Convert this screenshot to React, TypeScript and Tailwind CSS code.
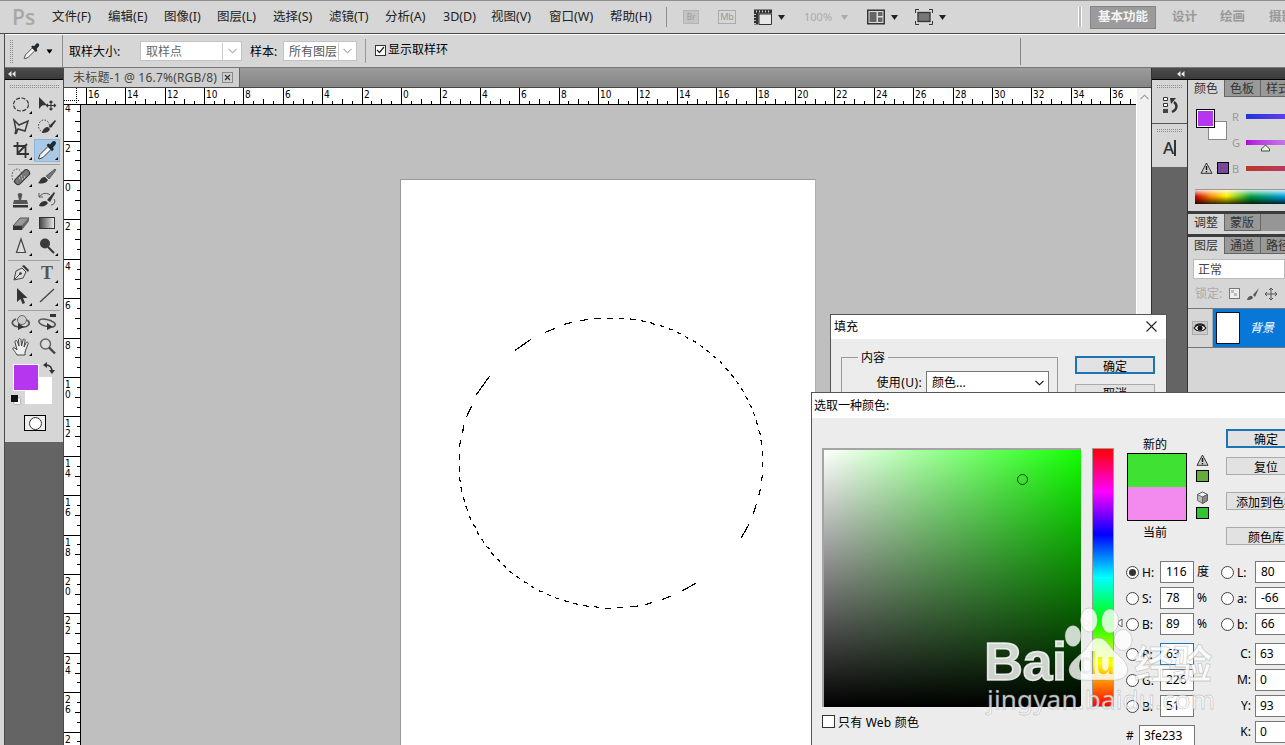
import type { ReactNode } from "react";

const menus = [
  { label: "文件(F)", width: "w-[56px]" },
  { label: "编辑(E)", width: "w-[56px]" },
  { label: "图像(I)", width: "w-[53px]" },
  { label: "图层(L)", width: "w-[56px]" },
  { label: "选择(S)", width: "w-[56px]" },
  { label: "滤镜(T)", width: "w-[56px]" },
  { label: "分析(A)", width: "w-[58px]" },
  { label: "3D(D)", width: "w-[48px]" },
  { label: "视图(V)", width: "w-[58px]" },
  { label: "窗口(W)", width: "w-[61px]" },
  { label: "帮助(H)", width: "w-[56px]" },
];

const UNIT = 39.4;

const Caret = ({ className = "" }: { className?: string }) => (
  <svg className={`shrink-0 ${className}`} width="7" height="5" viewBox="0 0 7 5" fill="currentColor">
    <path d="M0 0h7L3.5 5z" />
  </svg>
);

const Chevron = () => (
  <svg width="9" height="6" viewBox="0 0 9 6" fill="none" stroke="currentColor" strokeWidth="1.1">
    <path d="M.5.8 4.5 4.8 8.5.8" />
  </svg>
);

const Collapse = () => (
  <svg width="8" height="6" viewBox="0 0 8 6" fill="#e4e4e4">
    <path d="M3.5 0v6L0 3zM7.5 0v6L4 3z" />
  </svg>
);

const Grip = ({ className = "" }: { className?: string }) => (
  <div className={`shrink-0 bg-[linear-gradient(90deg,#d6d6d6_1px,transparent_1px),linear-gradient(#d6d6d6_1px,#8c8c8c_1px)] bg-[length:2px_2px] ${className}`} />
);

const Eyedropper = () => (
  <>
    <path d="M3.5 20.5 5 16.5l8-8 3 3-8 8-4 1.5z" fill="#f4f4f4" stroke="#3a3a3a" />
    <path d="m11.5 7 2-1.500 1.500 1 2.500-3c2-1.500 4.500.5 3 3L18 9.500l.8 1.800-1.800 2z" fill="#1f2a33" />
  </>
);

const MenuBar = () => (
  <header className="flex h-[34px] shrink-0 items-center border-t border-b border-t-[#8f8f8f] border-b-[#4a4a4a] bg-[#d6d6d6] pl-3 whitespace-nowrap">
    <div className="w-10 shrink-0 font-['Open_Sans',sans-serif] text-[21px] leading-8 font-semibold text-[#a8a8a8]">Ps</div>
    {menus.map((m) => (
      <div key={m.label} className={`shrink-0 pt-px text-[12.5px] text-[#222] ${m.width}`}>
        {m.label}
      </div>
    ))}
    <div className="h-5 w-px shrink-0 bg-[#8d8d8d]" />
    <div className="ml-4 flex h-[14px] w-4 shrink-0 items-center justify-center border border-[#b4b4b4] bg-[#c3c3c3] text-[8px] text-[#999]">Br</div>
    <div className="ml-[19px] flex h-[14px] w-[18px] shrink-0 items-center justify-center border border-[#aaa] text-[9px] text-[#999]">Mb</div>
    <svg className="ml-[18px] shrink-0" width="18" height="16" viewBox="0 0 18 16">
      <path d="M0 .5h18v4H4.500V15.500H0z" fill="#333" />
      <path d="M5 5h12.500v10.500H5z" fill="#e8e8e8" stroke="#333" />
      <path d="M2 2.500h14" stroke="#ccc" strokeDasharray="1 2" strokeWidth="2" />
      <path d="M1 5v10" stroke="#bbb" strokeDasharray="1 2" strokeWidth="2" />
    </svg>
    <Caret className="ml-[6px] text-[#222]" />
    <div className="ml-[19px] w-[30px] shrink-0 text-[11px] text-[#aaa]">100%</div>
    <Caret className="ml-[7px] text-[#aaa]" />
    <svg className="ml-[19px] shrink-0" width="18" height="16" viewBox="0 0 18 16">
      <rect x=".75" y="1.250" width="16.500" height="13.500" fill="#ddd" stroke="#333" strokeWidth="1.500" />
      <path d="M2.500 3h7v10h-7zM11 3h4.500v4H11zM11 8.500h4.500V13H11z" fill="#666" />
    </svg>
    <Caret className="ml-[6px] text-[#222]" />
    <svg className="ml-[17px] shrink-0" width="18" height="16" viewBox="0 0 18 16">
      <path d="M.5 4V.5H4M14 .5h3.500V4M17.500 12v3.500H14M4 15.500H.5V12" fill="none" stroke="#333" />
      <rect x="3" y="3.500" width="12" height="9" fill="#777" stroke="#333" strokeWidth="1.300" />
    </svg>
    <Caret className="ml-[6px] text-[#222]" />
    <div className="mr-[203px] ml-auto h-5 w-[4px] shrink-0 border-x border-x-white bg-[#bbb]" />
  </header>
);

const Workspaces = () => (
  <div className="absolute top-[6px] left-[1090px] flex items-center text-[12.5px] font-bold whitespace-nowrap text-[#999]">
    <div className="flex h-[23px] w-[66px] items-center justify-center border border-[#858585] bg-[#9b9b9b] text-[#f4f4f4]">基本功能</div>
    <div className="ml-4 w-12">设计</div>
    <div className="w-[49px]">绘画</div>
    <div>摄影</div>
  </div>
);

const OptionsBar = () => (
  <div className="flex h-[34px] shrink-0 items-center border-t border-b border-t-white border-b-[#777] bg-[#d6d6d6] pl-1 text-[12px] whitespace-nowrap text-black">
    <Grip className="h-6 w-1" />
    <svg className="ml-[9px] shrink-0" width="19" height="18" viewBox="1 2 22 20">
      <Eyedropper />
    </svg>
    <Caret className="ml-[5px] scale-90" />
    <div className="ml-[9px] h-full w-px shrink-0 bg-[#8d8d8d]" />
    <div className="ml-[6px] w-[71px] shrink-0 pt-0.5">取样大小:</div>
    <div className="flex h-5 w-[102px] shrink-0 items-center border border-[#c2c2c2] bg-white text-[#666]">
      <div className="flex h-[17px] w-[82px] items-center border-r border-[#ccc] pt-0.5 pl-[5px]">取样点</div>
      <div className="flex flex-1 justify-center text-[#aaa]"><Chevron /></div>
    </div>
    <div className="ml-2 w-[33px] shrink-0 pt-0.5">样本:</div>
    <div className="flex h-5 w-[74px] shrink-0 items-center border border-[#c2c2c2] bg-white text-[#555]">
      <div className="flex h-[17px] w-[55px] items-center border-r border-[#ccc] pt-0.5 pl-[5px]">所有图层</div>
      <div className="flex flex-1 justify-center text-[#aaa]"><Chevron /></div>
    </div>
    <div className="ml-2 h-6 w-px shrink-0 bg-[#999]" />
    <div className="mb-0.5 ml-[9px] flex h-[11px] w-[11px] shrink-0 items-center justify-center border border-[#333] bg-white">
      <svg width="9" height="8" viewBox="0 0 9 8" fill="none" stroke="#222" strokeWidth="1.200"><path d="m1 4 2.500 2.500L8 1" /></svg>
    </div>
    <div className="ml-[2px] w-[632px] shrink-0 pb-0.5">显示取样环</div>
    <div className="h-[27px] w-px shrink-0 bg-[#888]" />
  </div>
);

/* Tool glyphs are drawn in a 26x23 cell */
const toolGroups: { icon: ReactNode; selected?: boolean; single?: boolean }[][] = [
  [
    { icon: <ellipse cx="13" cy="11.500" rx="7.500" ry="6.500" fill="none" stroke="#333" strokeDasharray="4 1.5" strokeWidth="1.2" /> },
    { icon: <><path d="M5 4v12l3-3.500L13 12z" fill="#333" /><path d="M17 8v9M12.500 12.500h9M15.500 9.500 17 8l1.500 1.500M15.500 15.500 17 17l1.500-1.500M14 11l-1.500 1.500L14 14M20 11l1.500 1.500L20 14" fill="none" stroke="#333" strokeWidth="1.200" /></>, single: true },
    { icon: <path d="m6 4 5 5 9-4-3 10-7-2-3 5 1-4zM10 13l-2 5" fill="none" stroke="#3b3b3b" strokeWidth="1.500" /> },
    { icon: <><ellipse cx="10" cy="10" rx="5.500" ry="6" fill="none" stroke="#333" strokeDasharray="1.500 1.500" /><path d="M8 17c1-5 4-6 6-6l2 2c-1 3-4 4-8 4zM15 10l6-6 1 1-5 7z" fill="#333" /></> },
    { icon: <path d="M9.500 3v12H21M5.500 7h12v12M10 14l9-9" fill="none" stroke="#333" strokeWidth="1.800" /> },
    { icon: <g transform="translate(1 -1)"><Eyedropper /></g>, selected: true },
  ],
  [
    { icon: <><ellipse cx="9" cy="10" rx="5" ry="7" fill="none" stroke="#444" strokeDasharray="1.500 1.500" /><rect x="5" y="8" width="18" height="6.500" rx="3" transform="rotate(-45 14 11)" fill="#777" stroke="#333" /><path d="M11 12h1M13 10h1M14 13h1M16 11h1" stroke="#eee" /></> },
    { icon: <><path d="M4 17c2-1 2-6 7-6l3 3c-2 4-7 4-10 3z" fill="#333" /><path d="m12 10 9-7 1 1-7 9z" fill="#777" stroke="#333" strokeWidth=".6" /></> },
    { icon: <><path d="M11 11 10 7c-2-4 6-4 4 0l-1 4h6l1 4H5l1-4z" fill="#555" /><path d="M5 16h15v2.500H5z" fill="#333" /></> },
    { icon: <><path d="M5 17c1-4 4-5 7-5l2 2c-2 3-5 4-9 3zM13 11l7-8 1 1-5 9z" fill="#333" /><path d="M5 8c4-5 9-4 11-2M5 4v4h4M20 10c2 3 0 6-3 6" fill="none" stroke="#555" /></> },
    { icon: <><path d="m5 14 7-8h9l-7 8z" fill="#999" stroke="#555" /><path d="M5 14h9v4H5z" fill="#333" /><path d="m14 14 7-8v3l-7 9z" fill="#666" /></> },
    { icon: <><defs><linearGradient id="toolGrad"><stop stopColor="#444" /><stop offset="1" stopColor="#eee" /></linearGradient></defs><rect x="5.500" y="5.500" width="15" height="11" fill="url(#toolGrad)" stroke="#333" /></> },
    { icon: <path d="M13 4 8.500 17.500h9z" fill="#ddd" stroke="#444" strokeWidth="1.200" /> },
    { icon: <><circle cx="11" cy="8.500" r="5" fill="#3a3a3a" /><path d="m14 12 6 6" stroke="#333" strokeWidth="2" /></> },
  ],
  [
    { icon: <><path d="m6 18 2-9 6-3 4 4-3 6-9 2zM6 18l6-6" fill="#ddd" stroke="#444" /><path d="m14 4 2-1 5 5-1 2z" fill="#333" /><circle cx="12.500" cy="11.500" r="1.300" fill="#333" /></> },
    { icon: <text x="13" y="17" textAnchor="middle" fontFamily="Liberation Serif" fontWeight="bold" fontSize="18" fill="#555">T</text> },
    { icon: <path d="M9 3v14l3.500-3 2 5 2.500-1-2-5h4.500z" fill="#333" /> },
    { icon: <path d="M6 17 20 4" stroke="#444" strokeWidth="1.300" /> },
  ],
  [
    { icon: <><path d="M8 7c-7 3-3 8 4 8M19 8c5 3 1 8-6 7" fill="none" stroke="#555" strokeWidth="1.800" /><circle cx="14" cy="8" r="4.500" fill="#ccc" stroke="#666" /><path d="m10 11 6 4-6 3z" fill="#333" /></> },
    { icon: <><path d="M18 9C3 4 1 11 11 14l8 1c4-2 2-5-2-6" fill="none" stroke="#555" strokeWidth="1.600" /><path d="m13 11 6 4-6 3zM16 2h6v3h-6z" fill="#333" /></> },
    { icon: <path d="M9 20c-2-4-5-6-4-7s3 1 4 2L7 7c0-2 2-2 2.500 0L11 11 10.500 5c0-2 2-2 2.500 0l.5 6L15 5c.5-2 2.500-1 2 1l-1 6 2-4c1-2 3-.5 2 1l-3 8v3z" fill="#eee" stroke="#444" /> },
    { icon: <><circle cx="11.500" cy="9" r="5" fill="#ddd" stroke="#666" strokeWidth="1.500" /><path d="m15 12.500 6 6" stroke="#444" strokeWidth="2.400" /></>, single: true },
  ],
];

const Toolbox = () => (
  <aside className="flex w-[59px] shrink-0 flex-col border-r border-[#4a4a4a] bg-[#646464]">
    <div className="flex h-3 items-center border-b border-black bg-gradient-to-b from-[#4c4c4c] to-[#3a3a3a] pl-[3px]">
      <Collapse />
    </div>
    <div className="flex h-[362px] flex-col bg-[#d6d6d6] px-[3px] pt-1">
      <Grip className="mb-[5px] ml-px h-1 w-[51px]" />
      {toolGroups.map((group, g) => (
        <div key={g} className={`grid grid-cols-[26px_26px] ${g < 3 ? "mb-px border-b border-[#a0a0a0] pb-[2px]" : ""}`}>
          {group.map((tool, i) => (
            <div key={i} className={tool.selected ? "h-[23px] bg-[#a9c9e6] outline -outline-offset-1 outline-[#8fb4d6]" : "h-[23px]"}>
              <svg width="26" height="23" viewBox="0 0 26 23">
                {tool.icon}
                {!tool.single && <path d="M24 18v3h-3z" fill="#000" />}
              </svg>
            </div>
          ))}
        </div>
      ))}
      <svg className="mt-[6px] ml-[5px] overflow-visible" width="40" height="45" viewBox="0 0 40 45">
        <rect x="11.500" y="12.500" width="28" height="28" fill="#fff" stroke="#c4c4c4" strokeWidth=".5" />
        <rect x=".5" y=".5" width="25" height="26" fill="#b635ee" stroke="#fff" />
        <path d="M33 1c5 0 6 3 6 7" fill="none" stroke="#333" strokeWidth="1.500" />
        <path d="m30 1 4-3v6zM36 6h6l-3 4z" fill="#333" />
        <rect x="1" y="34" width="6.500" height="6.500" fill="#fff" stroke="#888" strokeWidth=".5" />
        <rect x="-2" y="31" width="7" height="7" fill="#111" />
      </svg>
      <div className="mt-[6px] ml-4 flex h-4 w-[22px] items-center justify-center border border-black bg-[#eee]">
        <div className="h-[13px] w-[13px] rounded-full border border-[#333] bg-white" />
      </div>
    </div>
  </aside>
);

const HorizontalRuler = () => (
  <svg className="shrink-0 bg-white" width="1072" height="17" viewBox="64 88 1072 17">
    {Array.from({ length: 27 }, (_, i) => {
      const x = Math.round(401 + (i - 8) * UNIT);
      return (
        <g key={i}>
          <rect x={x} y="88" width="1" height="16" />
          {[1, 2, 3].map((q) => (
            <rect key={q} x={Math.round(401 + (i - 8 + q / 4) * UNIT)} y={q === 2 ? 99 : 101} width="1" height={q === 2 ? 5 : 3} />
          ))}
          <text x={x + 2} y="98" fontSize="10" className="font-['DejaVu_Sans_Condensed','DejaVu_Sans',sans-serif]">
            {Math.abs(i - 8) * 2}
          </text>
        </g>
      );
    })}
    <rect x="64" y="88" width="16" height="16" fill="#fff" />
    <path d="M76.500 88v16M64 100.500h16" stroke="#000" strokeDasharray="1 1" />
    <rect x="64" y="104" width="1072" height="1" />
  </svg>
);

const VerticalRuler = () => (
  <svg className="shrink-0 overflow-visible bg-white" width="17" height="640" viewBox="64 105 17 640">
    {Array.from({ length: 17 }, (_, i) => {
      const y = Math.round(180 + (i - 2) * UNIT);
      const digits = String(Math.abs(i - 2) * 2).split("");
      return (
        <g key={i}>
          {i > 0 && <rect x="64" y={y} width="16" height="1" />}
          {[1, 2, 3].map((q) => (
            <rect key={q} x={q === 2 ? 75 : 77} y={Math.round(180 + (i - 2 + q / 4) * UNIT)} width={q === 2 ? 5 : 3} height="1" />
          ))}
          {digits.map((d, n) => (
            <text key={n} x="65" y={y + 11 + n * 10} fontSize="10" className="font-['DejaVu_Sans_Condensed','DejaVu_Sans',sans-serif]">{d}</text>
          ))}
        </g>
      );
    })}
    <rect x="80" y="105" width="1" height="640" />
  </svg>
);

const Selection = () => (
  <svg className="absolute top-[120px] left-0" width="400" height="330" viewBox="3 0 1200 990" fill="none" stroke="#000" strokeWidth="3.5" shapeRendering="crispEdges">
    <path d="M345 151L393 118M435 97L466 85M492 73L516 67M541 62L564 58M581 55L603 55M621 55L640 55M656 55L672 56M690 57L708 59M722 62L738 65M751 68L764 73M780 77L792 80M806 86L817 90M831 97L843 102M855 109L865 115M878 121L888 127M901 137L910 142M919 151L929 157M940 168L949 175M960 184L967 191M976 204L986 213M993 223L1002 233M1009 244L1016 252M1023 264L1030 275M1036 288L1043 299M1048 312L1055 323M1060 336L1064 348M1068 362L1073 376M1076 390L1081 404M1083 420L1085 434M1087 453L1087 467M1087 486L1087 502M1087 524L1085 543M1082 566L1076 586M1069 612L1060 641M1047 673L1024 713" />
    <path d="M887 850L846 873M812 888L786 899M756 908L735 914M714 918L690 920M668 922L651 923M633 925L615 925M597 922L582 920M566 919L549 916M533 913L520 910M506 906L492 902M477 897L465 893M452 888L441 882M427 876L416 872M402 863L393 858M383 850L371 845M359 835L349 829M339 821L328 813M318 802L310 795M300 784L291 777M283 767L273 758M268 747L258 738M252 727L244 716M236 704L231 693M227 683L219 672M213 660L208 648M203 632L197 618M194 606L190 592M186 577L183 562M181 547L178 532M178 515L178 498M178 480L178 461M178 442L182 420M188 398L191 374M199 352L215 318M228 285L269 228" />
  </svg>
);

const DocumentArea = () => (
  <main className="flex w-[1087px] shrink-0 flex-col bg-[#bfbfbf]">
    <div className="flex h-5 shrink-0 border-b border-[#444] bg-gradient-to-b from-[#9c9c9c] to-[#858585]">
      <div className="flex w-[176px] items-center border-r border-[#666] bg-[#cfcfcf] pl-[9px] text-[12px] whitespace-nowrap text-[#444]">
        <div className="w-[149px] pt-px tracking-[0.2px]">未标题-1 @ 16.7%(RGB/8)</div>
        <div className="flex h-[11px] w-[11px] items-center justify-center border border-[#888]">
          <svg width="7" height="7" viewBox="0 0 7 7" stroke="#333" strokeWidth="1.200"><path d="m1 1 5 5M6 1 1 6" /></svg>
        </div>
      </div>
    </div>
    <div className="flex min-h-0 flex-1">
      <div className="flex w-[1072px] flex-col">
        <HorizontalRuler />
        <div className="flex min-h-0 flex-1">
          <VerticalRuler />
          <div className="flex-1 pt-[74px] pl-[319px]">
            <div className="relative h-[570px] w-[416px] border border-[#999] border-r-[#b0b0b0] bg-white">
              <Selection />
            </div>
          </div>
        </div>
      </div>
      <div className="flex w-[15px] justify-center border-l border-white bg-[#f0f0f0] pt-1.5 text-[#999]">
        <div className="rotate-180 self-start"><Chevron /></div>
      </div>
    </div>
  </main>
);

const Warning = () => (
  <svg width="13" height="12" viewBox="0 0 13 12">
    <path d="M6.500 1 12 11.300H1z" fill="#ccc" stroke="#333" strokeLinejoin="round" />
    <path d="M6.500 4v4M6.500 9v1.300" stroke="#111" strokeWidth="1.400" />
  </svg>
);

const PanelTabs = ({ tabs }: { tabs: string[] }) => (
  <div className="flex h-[17px] shrink-0 bg-[#969696] text-[12px] leading-[17px] whitespace-nowrap">
    {tabs.map((tab, i) => (
      <div key={tab} className={i === 0 ? "w-9 shrink-0 bg-[#d6d6d6] pl-[6px] text-[#333]" : "w-[36px] shrink-0 border-b border-l border-[#666] bg-[#999] pl-[5px] text-[#333]"}>
        {tab}
      </div>
    ))}
    <div className="flex-1 border-l border-[#666]" />
  </div>
);

const Panels = () => (
  <aside className="flex min-w-0 flex-1 flex-col border-l border-[#333] bg-[#646464]">
    <div className="flex h-3 shrink-0 items-center border-b border-black bg-gradient-to-b from-[#4c4c4c] to-[#3a3a3a] pl-[25px]">
      <Collapse />
    </div>
    <div className="flex min-h-0 flex-1">
      <div className="w-[35px] shrink-0">
        <div className="h-11 border-b border-[#555] bg-[#d6d6d6] pt-1">
          <Grip className="mx-1 h-1" />
          <svg className="mt-2 ml-[10px]" width="18" height="18" viewBox="0 0 18 18">
            <path d="M1.500 1.500h4v3h-4zM1.500 7.500h4v3h-4z" fill="#fff" stroke="#333" />
            <path d="M1 13h5v4H1z" fill="#444" />
            <path d="M10 16c5-2 6-7 2-10" fill="none" stroke="#333" strokeWidth="2.400" />
            <path d="M8 2h6L9 8z" fill="#333" />
          </svg>
        </div>
        <div className="h-[43px] bg-[#d6d6d6] pt-1">
          <Grip className="mx-1 h-1" />
          <div className="mt-[5px] ml-[11px] flex items-center text-[17px] leading-[22px] font-medium text-[#333]">A<span className="h-4 w-[1.5px] bg-[#333]" /></div>
        </div>
      </div>
      <div className="flex min-w-0 flex-1 flex-col border-l border-[#333] bg-[#d6d6d6]">
        <PanelTabs tabs={["颜色", "色板", "样式"]} />
        <div className="flex h-[92px] shrink-0">
          <div className="w-[43px] shrink-0 pt-3 pl-2">
            <svg width="32" height="32" viewBox="0 0 32 32">
              <rect x="12.500" y="12.500" width="18" height="18" fill="#fff" stroke="#888" />
              <rect x=".5" y=".5" width="18" height="18" fill="#fff" stroke="#000" />
              <rect x="2" y="2" width="15" height="15" fill="#b635ee" />
            </svg>
            <div className="mt-[21px] ml-1 flex items-center gap-1">
              <Warning />
              <div className="h-3 w-3 shrink-0 border border-black bg-[#7c469b]" />
            </div>
          </div>
          <div className="flex-1 pt-[13px] pl-px text-[11px] leading-[14px] text-[#999]">
            <div className="flex h-[26px]"><span className="w-[14px]">R</span><span className="mt-1 h-[5px] w-16 shrink-0 bg-gradient-to-r from-[#1c35d8] to-[#8040ff]" /></div>
            <div className="flex h-[26px]">
              <span className="w-[14px]">G</span>
              <span className="mt-1 h-[5px] w-16 shrink-0 bg-gradient-to-r from-[#b000d8] to-[#d0a0ef]" />
              <svg className="mt-[8px] -ml-[50px] shrink-0" width="11" height="8" viewBox="0 0 11 8"><path d="M5.500 1 9.500 5v2h-8V5z" fill="#dfd" stroke="#444" /></svg>
            </div>
            <div className="flex h-[26px]"><span className="w-[14px]">B</span><span className="mt-1 h-[5px] w-16 shrink-0 bg-gradient-to-r from-[#b83a20] to-[#c0307a]" /></div>
          </div>
        </div>
        <div className="ml-[7px] h-[15px] shrink-0 border-t border-[#999] bg-[linear-gradient(to_bottom,rgba(255,255,255,.8),transparent_45%,rgba(0,0,0,.8)),linear-gradient(to_right,#d00000,#ff9000_18%,#fff000_35%,#00a040_62%,#00a0e0_98%)]" />
        <div className="mt-[7px] h-[3px] shrink-0 bg-[#3c3c3c]" />
        <PanelTabs tabs={["调整", "蒙版"]} />
        <div className="mt-[3px] h-[3px] shrink-0 bg-[#3c3c3c]" />
        <PanelTabs tabs={["图层", "通道", "路径"]} />
        <div className="mt-[5px] ml-[5px] h-5 shrink-0 border border-[#bbb] bg-white pl-1 text-[12px] leading-[20px] text-[#444]">正常</div>
        <div className="flex h-[29px] shrink-0 items-center pl-[7px] text-[12px] text-[#aaa]">
          <span className="w-[34px] shrink-0 pt-px">锁定:</span>
          <svg className="shrink-0" width="48" height="14" viewBox="0 0 48 14">
            <rect x=".5" y="1.500" width="10" height="10" fill="#eee" stroke="#777" />
            <path d="M2 3h3v3H2zM5 6h3v3H5z" fill="#bbb" />
            <path d="M18 13c1-4 3-4 5-4l1 2c-2 2-4 2-6 2zM24 8l6-7-4 9z" fill="#555" />
            <path d="M42 1v12M36 7h12M40 3l2-2 2 2M40 11l2 2 2-2M38 5l-2 2 2 2M46 5l2 2-2 2" fill="none" stroke="#555" />
          </svg>
        </div>
        <div className="flex h-10 shrink-0 border-y border-[#777]">
          <div className="flex w-[25px] shrink-0 items-center justify-center border-r border-[#aaa]">
            <svg width="16" height="14" viewBox="0 0 16 14">
              <rect x=".5" y=".5" width="15" height="13" fill="#ccc" stroke="#aaa" />
              <path d="M2 7c3-4 9-4 12 0-3 4-9 4-12 0zM3 4.500c3-2 7-2 10 0" fill="#eee" stroke="#222" strokeWidth="1.200" />
              <circle cx="8" cy="7" r="2.500" fill="#111" />
            </svg>
          </div>
          <div className="flex flex-1 items-center bg-[#0878d8] pl-[3px] text-white">
            <div className="h-8 w-6 shrink-0 border border-[#112] bg-white" />
            <span className="ml-[10px] shrink-0 text-[12px] italic">背景</span>
          </div>
        </div>
      </div>
    </div>
  </aside>
);

const FillDialog = () => (
  <section className="absolute top-[314px] left-[830px] flex h-[79px] w-[337px] flex-col overflow-hidden border border-[#555] bg-[#ececec] text-[12px] text-black">
    <div className="flex h-[24px] shrink-0 items-center justify-between bg-white pr-[9px] pb-px pl-[3px]">
      <span>填充</span>
      <svg width="11" height="11" viewBox="0 0 11 11" stroke="#222" strokeWidth="1.100"><path d="m.5.5 10 10M10.500.5l-10 10" /></svg>
    </div>
    <div className="flex pt-[9px] pl-[10px]">
      <fieldset className="h-[80px] w-[217px] shrink-0 border border-[#999]">
        <legend className="ml-4 h-[18px] px-[3px] leading-[19px]">内容</legend>
        <div className="mt-[5px] flex items-center">
          <span className="w-[84px] pr-[4px] text-right tracking-[0.4px]">使用(U):</span>
          <div className="flex h-[23px] w-[123px] items-center justify-between border border-[#777] bg-white pr-1 pl-[5px]">
            <span>颜色...</span>
            <Chevron />
          </div>
        </div>
      </fieldset>
      <div className="mt-2 ml-[17px] flex flex-col gap-[10px] text-center">
        <div className="h-[18px] w-20 border-2 border-[#1d74b4] bg-[#e2e2e2] leading-[17px]">确定</div>
        <div className="h-[18px] w-20 border border-[#aaa] bg-[#e2e2e2] leading-[17px]">取消</div>
      </div>
    </div>
  </section>
);

type ChannelProps = { label: string; value: string; unit?: string; checked?: boolean; focus?: boolean };

const Channel = ({ label, value, unit, checked, focus }: ChannelProps) => (
  <div className="flex h-[22px] items-center">
    <span className="flex h-[13px] w-[13px] shrink-0 items-center justify-center rounded-full border border-[#444] bg-white">
      {checked && <span className="h-[7px] w-[7px] rounded-full bg-[#333]" />}
    </span>
    <span className="w-[21px] shrink-0 pt-px pl-[3px]">{label}:</span>
    <span className={focus ? "h-[22px] w-[34px] border border-[#1d74b4] bg-white pl-[5px] leading-[20px]" : "h-[22px] w-[34px] border border-[#777] bg-white pl-[5px] leading-[20px]"}>{value}</span>
    <span className="pl-[3px]">{unit}</span>
  </div>
);

const ColorPicker = () => (
  <section className="absolute top-[392px] left-[811px] flex h-[370px] w-[520px] flex-col border border-[#555] bg-[#ececec] text-[12px] whitespace-nowrap text-black">
    <div className="flex h-[25px] shrink-0 items-center bg-white pl-[2px]">选取一种颜色:</div>
    <div className="flex pt-[30px] pl-[10px]">
      <div className="w-[259px] shrink-0">
        <div className="relative h-[259px] w-[259px] border-t-2 border-l-2 border-[#a5a5a5]">
          <div className="h-full w-full bg-[linear-gradient(to_top,#000,transparent),linear-gradient(to_right,#fff,#10ff00)]" />
          <div className="absolute top-[24px] left-[193px] h-[11px] w-[11px] rounded-full border border-[#143a10]" />
        </div>
        <div className="mt-2 flex h-[14px] items-center gap-[3px]">
          <span className="mb-px h-[13px] w-[13px] border border-[#333] bg-white" />
          <span className="pt-0.5 tracking-[0.2px]">只有 Web 颜色</span>
        </div>
      </div>
      <div className="ml-[11px] h-[259px] w-[22px] shrink-0 border border-[#999] bg-[linear-gradient(to_bottom,#f00,#f0f_16.6%,#00f_33.3%,#0ff_50%,#0f0_66.6%,#ff0_83.3%,#f00)]" />
      <div className="-mt-[15px] ml-3 w-[100px] shrink-0">
        <div className="flex h-[115px] pl-px">
          <div className="w-[60px] text-center">
            <div className="h-5 pr-1 leading-[24px]">新的</div>
            <div className="h-[68px] w-[60px] border border-black bg-[linear-gradient(to_bottom,#3fe233_50%,#f38aee_50%)]" />
            <div className="h-5 pr-1 leading-[24px]">当前</div>
          </div>
          <div className="flex flex-col items-center pt-[21px] pl-[9px]">
            <Warning />
            <div className="mt-[4px] h-[12px] w-[13px] border border-black bg-[#64ac3c]" />
            <svg className="mt-[9px]" width="13" height="13" viewBox="0 0 13 13" stroke="#555" strokeWidth=".8">
              <path d="m6.500 1 5 2.500v6l-5 3-5-3v-6z" fill="#bbb" />
              <path d="m1.500 3.500 5 2.500 5-2.500-5-2.500z" fill="#eee" />
              <path d="M6.500 6v6.500l5-3v-6z" fill="#888" />
            </svg>
            <div className="mt-[3px] h-[12px] w-[13px] border border-black bg-[#33c433]" />
          </div>
        </div>
        <div className="mt-[13px] flex flex-col gap-1">
          <Channel label="H" value="116" unit="度" checked />
          <Channel label="S" value="78" unit="%" />
          <Channel label="B" value="89" unit="%" />
        </div>
        <div className="mt-2 flex flex-col gap-1">
          <Channel label="R" value="63" focus />
          <Channel label="G" value="226" />
          <Channel label="B" value="51" />
        </div>
        <div className="mt-[8px] flex items-center">
          <span className="w-[13px]">#</span>
          <span className="h-[22px] w-[56px] border border-[#777] bg-white pl-1 leading-[20px]">3fe233</span>
        </div>
      </div>
      <div className="-mt-[19px] w-[100px] shrink-0 text-center">
        <div className="h-[19px] w-20 border-2 border-[#1d74b4] bg-[#e2e2e2] leading-[17px]">确定</div>
        <div className="mt-[9px] h-[18px] w-20 border border-[#aaa] bg-[#e2e2e2] leading-[19px]">复位</div>
        <div className="mt-[17px] h-[18px] w-20 border border-[#aaa] bg-[#e2e2e2] leading-[19px]">添加到色板</div>
        <div className="mt-[17px] h-[18px] w-20 border border-[#aaa] bg-[#e2e2e2] leading-[19px]">颜色库</div>
        <div className="mt-[16px] -ml-[5px] flex flex-col gap-1 text-left">
          <Channel label="L" value="80" />
          <Channel label="a" value="-66" />
          <Channel label="b" value="66" />
        </div>
        <div className="mt-2 flex flex-col gap-1 text-left">
          {[["C", "63"], ["M", "0"], ["Y", "93"], ["K", "0"]].map(([label, value]) => (
            <div key={label} className="flex h-[22px] items-center">
              <span className="w-[29px] pr-[4px] text-right">{label}:</span>
              <span className="h-[22px] w-[34px] border border-[#777] bg-white pl-1 leading-[20px]">{value}</span>
            </div>
          ))}
        </div>
      </div>
    </div>
  </section>
);

const Watermark = () => (
  <svg className="absolute top-[600px] left-[980px]" width="245" height="125" viewBox="980 600 245 125">
    <defs>
      <mask id="pawMask" maskUnits="userSpaceOnUse" x="1055" y="600" width="85" height="90">
        <rect x="1055" y="600" width="85" height="90" fill="#fff" />
        <text x="1078" y="674" fontSize="31" fontWeight="bold" fontFamily="Liberation Sans" textLength="37" fill="#000">du</text>
      </mask>
    </defs>
    <path d="M1083.500 619v8l6-4z" fill="#fff" stroke="#888" strokeWidth=".6" />
    <path d="M1122 619v8l-4-3v-2z" fill="#fff" stroke="#555" />
    <g fill="#fff" fillOpacity=".8" stroke="#888" strokeOpacity=".4" strokeWidth=".8">
      <text x="984" y="680" fontSize="54" fontWeight="bold" fontFamily="Liberation Sans" textLength="83" stroke="#fff" strokeOpacity=".8" strokeWidth="1.500">Bai</text>
      <g mask="url(#pawMask)">
        <path d="M1098 638c8 0 11 8 17 14 7 6 15 13 12 21-3 9-15 7-28 7s-25 2-29-6c-4-9 5-15 13-22 6-6 8-14 15-14z" />
        <ellipse cx="1073" cy="636" rx="8" ry="10.500" />
        <ellipse cx="1089" cy="620" rx="8.500" ry="12" />
        <ellipse cx="1110" cy="621" rx="8.500" ry="12" />
        <ellipse cx="1123" cy="640" rx="9" ry="10.500" />
      </g>
      <text x="1134" y="678" fontSize="39" fontWeight="bold" fontFamily="Noto Sans CJK SC">经验</text>
      <text x="987" y="709" fontSize="26" fontFamily="Noto Sans" textLength="228">jingyan.baidu.com</text>
    </g>
  </svg>
);

const App = () => (
  <div className="relative flex h-[745px] w-[1285px] flex-col overflow-hidden bg-[#d6d6d6] font-['Noto_Sans','Noto_Sans_CJK_SC',sans-serif]">
    <MenuBar />
    <div className="flex min-h-0 flex-1 flex-col pl-1">
      <div className="flex min-h-0 flex-1 flex-col border-l border-[#4a4a4a]">
        <OptionsBar />
        <div className="flex min-h-0 flex-1">
          <Toolbox />
          <DocumentArea />
          <Panels />
        </div>
      </div>
    </div>
    <Workspaces />
    <FillDialog />
    <ColorPicker />
    <Watermark />
  </div>
);

export default App;
